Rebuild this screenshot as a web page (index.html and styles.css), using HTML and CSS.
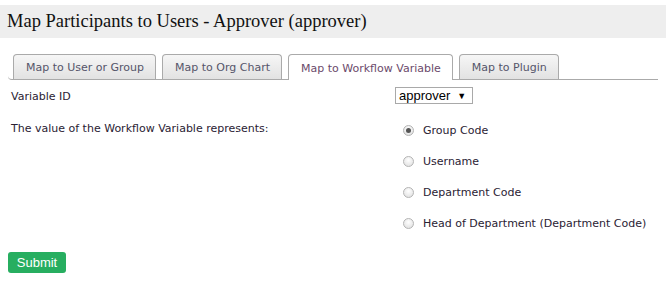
FILE: index.html
```html
<!DOCTYPE html>
<html>
<head>
<meta charset="utf-8">
<link rel="stylesheet" href="styles.css">
</head>
<body>
<div class="header"><h1 class="title">Map Participants to Users - Approver (approver)</h1></div>
<div class="content">
  <ul class="tabs">
    <li class="tab">Map to User or Group</li>
    <li class="tab">Map to Org Chart</li>
    <li class="tab active">Map to Workflow Variable</li>
    <li class="tab">Map to Plugin</li>
  </ul>
  <div class="row first">
    <div class="label">Variable ID</div>
    <div class="field"><div class="select">approver <span class="arrow">▼</span></div></div>
  </div>
  <div class="row">
    <div class="label">The value of the Workflow Variable represents:</div>
    <div class="field radios">
      <div class="opt"><span class="radio checked"></span>Group Code</div>
      <div class="opt"><span class="radio"></span>Username</div>
      <div class="opt"><span class="radio"></span>Department Code</div>
      <div class="opt"><span class="radio"></span>Head of Department (Department Code)</div>
    </div>
  </div>
  <button class="submit">Submit</button>
</div>
</body>
</html>
```
FILE: styles.css
```css
html, body { margin: 0; padding: 0; background: #fff; }
body { font-family: "DejaVu Sans", Verdana, sans-serif; font-size: 11px; color: #2a2233; }
.header { margin-top: 5px; background: #eeeeee; height: 33px; display: flex; align-items: center; padding-left: 7px; }
.title { margin: 0; font-family: "Liberation Serif", "Times New Roman", serif; font-weight: normal; font-size: 18.5px; color: #111; }
.content { padding: 0 8px; }
.tabs { list-style: none; margin: 16px 0 0; padding: 0 0 0 5px; display: flex; gap: 6px; border-bottom: 1px solid #aaa; border-bottom-left-radius: 4px; }
.tab { height: 25px; box-sizing: border-box; padding: 1px 11px 0 12px; border: 1px solid #aaa; border-bottom: none; border-radius: 4px 4px 0 0; background: linear-gradient(#f6f6f6, #e2e2e2); color: #55556a; display: flex; align-items: center; margin-bottom: 0; }
.tab.active { background: #fff; color: #6b4a6b; height: 26px; margin-bottom: -1px; }
.row { display: flex; }
.row.first { margin-top: 7px; align-items: flex-start; }
.label { width: 387px; box-sizing: border-box; padding-left: 3px; }
.row.first .label { padding-top: 3px; }
.row + .row { margin-top: 18px; }
.select { display: inline-flex; align-items: center; height: 17px; box-sizing: border-box; border: 1px solid #a9a9a9; padding: 0 6px 0 3px; font-family: "Liberation Sans", Arial, sans-serif; font-size: 13px; color: #000; gap: 7px; }
.arrow { font-size: 9px; }
.radios { display: flex; flex-direction: column; gap: 15px; padding-left: 8px; margin-top: 0px; }
.opt { display: flex; align-items: center; height: 16px; }
.radio { width: 11px; height: 11px; box-sizing: border-box; border-radius: 50%; border: 1px solid #b4b4b4; background: radial-gradient(circle at 50% 35%, #fff, #dcdcdc); margin-right: 9px; position: relative; }
.radio.checked::after { content: ""; position: absolute; left: 2px; top: 2px; width: 5px; height: 5px; border-radius: 50%; background: #555; }
.submit { margin-top: 21px; background: #27ae60; border: none; border-radius: 3px; color: #fff; font-family: "Liberation Sans", Arial, sans-serif; font-size: 13px; width: 58px; height: 21px; padding: 0; }
```
